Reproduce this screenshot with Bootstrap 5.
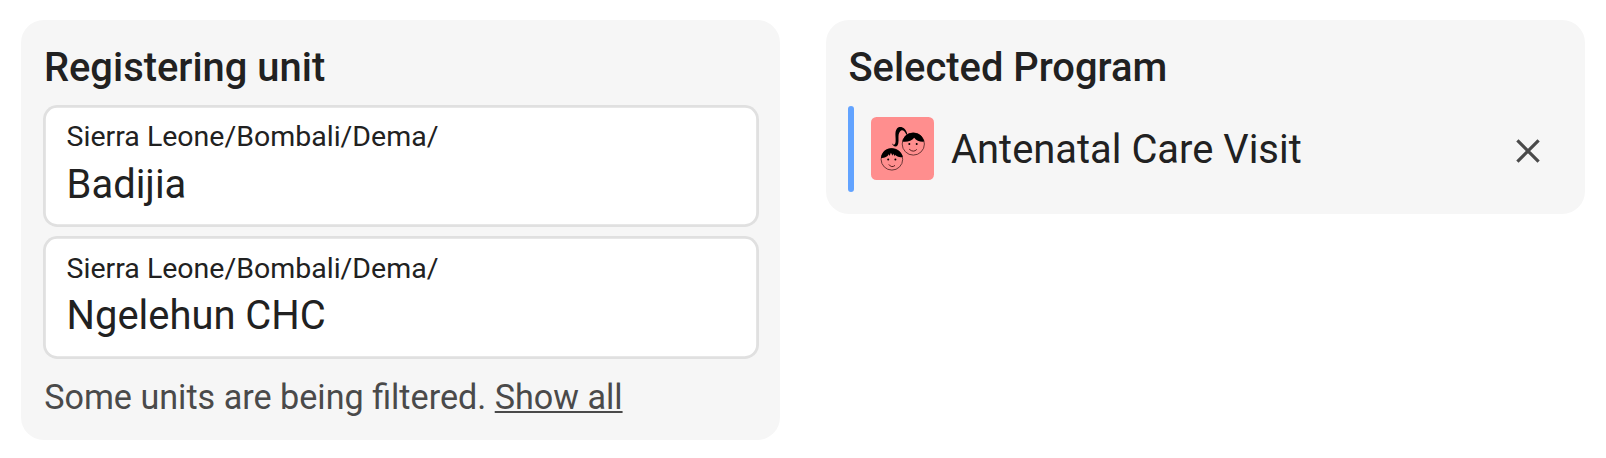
<!DOCTYPE html>
<html lang="en">
<head>
<meta charset="utf-8">
<meta name="viewport" content="width=device-width, initial-scale=1">
<title>Registration</title>
<link href="https://cdn.jsdelivr.net/npm/bootstrap@5.3.0/dist/css/bootstrap.min.css" rel="stylesheet">
<style>
body { font-family: Roboto, "Liberation Sans", sans-serif; color: #212121; background: #fff; overflow: hidden; }
.page { padding: 20px 21px 0 21.3px; gap: 45.7px; }
.panel { background: #f6f6f6; border-radius: 22.7px; padding: 23.9px 21.3px 22.9px; width: 758.8px; }
.panel-title { font-size: 39.9px; font-weight: 500; line-height: 48.8px; margin: 0 0 12px 1.3px; }
.unit { background: #fff; box-shadow: inset 0 0 0 2.84px #e0e0e0; border-radius: 14.2px; height: 122.6px; padding: 15.8px 24px 0; margin-bottom: 8.8px; }
.unit-path { font-size: 28.5px; line-height: 34px; margin-bottom: 6.6px; }
.unit-name { font-size: 39.9px; line-height: 48px; }
.note { font-size: 34.15px; line-height: 40px; color: #4a4a4a; margin: 18.4px 0 0 1.6px; }
.note a { color: inherit; text-decoration-thickness: 2px; text-underline-offset: 2px; }
.panel-program { height: 194px; }
.program { height: 86px; margin: 13.1px 0 0 1.1px; }
.program-bar { width: 6.1px; height: 100%; border-radius: 3px; background: #62a3ff; margin-right: 17px; }
.program-icon { width: 63px; height: 63px; margin-right: 16.8px; }
.program-name { font-size: 39.9px; line-height: 48px; padding-top: 2.2px; }
.clear-btn { width: 36px; height: 36px; margin: 5px 17.3px 0 0; }
</style>
</head>
<body>
<main class="page d-flex align-items-start">
  <section class="panel flex-shrink-0">
    <h2 class="panel-title">Registering unit</h2>
    <div class="unit">
      <div class="unit-path">Sierra Leone/Bombali/Dema/</div>
      <div class="unit-name">Badijia</div>
    </div>
    <div class="unit">
      <div class="unit-path">Sierra Leone/Bombali/Dema/</div>
      <div class="unit-name">Ngelehun CHC</div>
    </div>
    <p class="note">Some units are being filtered. <a href="#">Show all</a></p>
  </section>
  <section class="panel panel-program flex-shrink-0">
    <h2 class="panel-title mb-0">Selected Program</h2>
    <div class="program d-flex align-items-center">
      <span class="program-bar"></span>
      <svg class="program-icon" viewBox="0 0 63 63" aria-hidden="true">
        <rect width="63" height="63" rx="5.5" fill="#ff8e8e"/>
        <!-- ponytail -->
        <path d="M35.4 18C34 13.8 31 12 29 14.4C26 18 28.8 24 26.6 28.3C25.2 30.4 21.8 29.8 20.8 25.8C21.7 28.3 24.4 28.6 24.6 24.5C25 19.5 23.3 15 26 11.4C29.4 8 34.8 10.8 36.2 16.8Z"/>
        <!-- girl -->
        <circle cx="42.3" cy="27" r="11.1" fill="none" stroke="#5b2c2c" stroke-width=".9"/>
        <path d="M31.4 24.6C32.6 19 37 15.7 42.2 15.7C47.5 15.7 52 19 53.3 24.6C49.5 25.1 45.2 23.8 43.2 20.7C40.8 23.8 36 25.5 31.4 24.6Z"/>
        <circle cx="38.3" cy="27.1" r="1"/><circle cx="45.7" cy="27.1" r="1"/>
        <path d="M38.2 32.2Q42.5 36 45.8 32.4" fill="none" stroke="#5b2020" stroke-width="1"/>
        <!-- boy -->
        <circle cx="20.9" cy="42.3" r="10.8" fill="none" stroke="#5b2c2c" stroke-width=".9"/>
        <path d="M10 41C10.6 35 15 31.3 20.3 31.3C26 31.3 30.8 34.8 31.7 40C28.5 40.6 25.8 39.8 24.2 37.8L24 39.3L22.1 36.7L21.5 38.8L19.9 35.8L18.6 39L17.8 37.2C16.3 39.9 13.2 41.3 10 41Z"/>
        <circle cx="17.2" cy="42.5" r="1"/><circle cx="24.4" cy="42.5" r="1"/>
        <path d="M17.8 47.4Q20.6 51.3 24 48.4" fill="none" stroke="#5b2020" stroke-width="1"/>
      </svg>
      <span class="program-name">Antenatal Care Visit</span>
      <button type="button" class="clear-btn btn p-0 border-0 ms-auto d-flex" aria-label="Clear selection">
        <svg width="36" height="36" viewBox="0 0 36 36"><path d="M7.4 7.4L28.6 28.6M28.6 7.4L7.4 28.6" stroke="#4a4a4a" stroke-width="3.2"/></svg>
      </button>
    </div>
  </section>
</main>
<script src="https://cdn.jsdelivr.net/npm/bootstrap@5.3.0/dist/js/bootstrap.bundle.min.js"></script>
</body>
</html>
